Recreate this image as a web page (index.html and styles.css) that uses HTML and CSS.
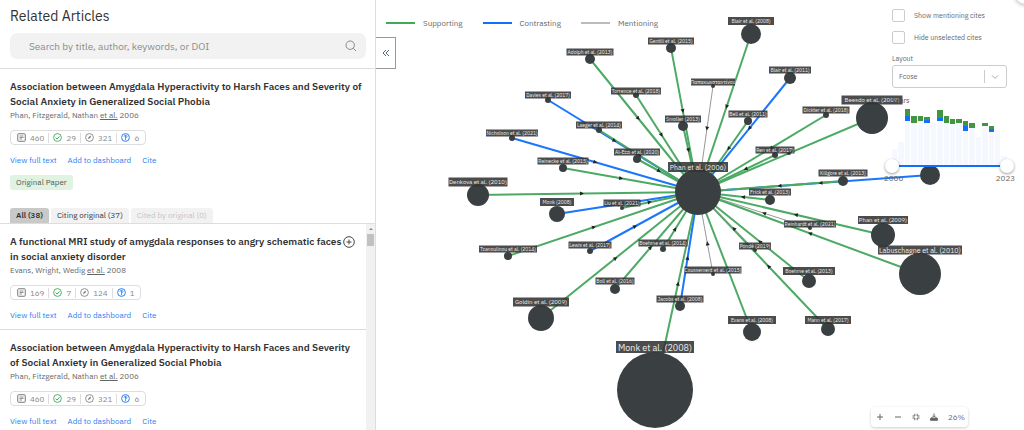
FILE: index.html
```html
<!DOCTYPE html>
<html lang="en">
<head>
<meta charset="utf-8">
<title>Related Articles</title>
<link rel="stylesheet" href="styles.css">
</head>
<body>
<svg class="sprite" aria-hidden="true">
  <symbol id="i-doc" viewBox="0 0 18 18"><rect x="1.5" y="1.5" width="15" height="15" rx="1.5" fill="none" stroke="#777" stroke-width="2"/><path d="M5 6h8M5 9h8M5 12h5" stroke="#777" stroke-width="1.6"/></symbol>
  <symbol id="i-check" viewBox="0 0 18 18"><circle cx="9" cy="9" r="7.8" fill="none" stroke="#43a75c" stroke-width="1.8"/><path d="M5 9.2l3 3 5-5.5" fill="none" stroke="#43a75c" stroke-width="2"/></symbol>
  <symbol id="i-mention" viewBox="0 0 18 18"><circle cx="9" cy="9" r="7.8" fill="none" stroke="#777" stroke-width="1.6"/><path d="M6 12.2l1.2-4 5-3-1.6 5z" fill="#777"/></symbol>
  <symbol id="i-contrast" viewBox="0 0 18 18"><circle cx="9" cy="9" r="7.8" fill="none" stroke="#2a80f0" stroke-width="2"/><path d="M6 7.2c0-3.4 6-3.4 6 0 0 2-3 2-3 4M9 12v2.4M9 4.6v6" fill="none" stroke="#2a80f0" stroke-width="1.7"/></symbol>
</svg>
<div class="app">
  <aside class="sidebar">
    <header class="head">
      <h1>Related Articles</h1>
      <label class="search">
        <input type="text" aria-label="Search articles" placeholder="Search by title, author, keywords, or DOI">
        <svg viewBox="0 0 12 12" width="12" height="12"><circle cx="5.2" cy="5.2" r="4.2"/><path d="M8.3 8.3l2.7 2.7"/></svg>
      </label>
    </header>
    <section class="article original">
      <h2>Association between Amygdala Hyperactivity to Harsh Faces and Severity of Social Anxiety in Generalized Social Phobia</h2>
      <p class="authors">Phan, Fitzgerald, Nathan <u>et al.</u> 2006</p>
      <div class="stats"><span><svg><use href="#i-doc"/></svg>460</span><span><svg><use href="#i-check"/></svg>29</span><span><svg><use href="#i-mention"/></svg>321</span><span><svg><use href="#i-contrast"/></svg>6</span></div>
      <nav class="links"><a href="#">View full text</a><a href="#">Add to dashboard</a><a href="#">Cite</a></nav>
      <span class="tag">Original Paper</span>
    </section>
    <div class="tabs"><button class="active">All (38)</button><button>Citing original (37)</button><button disabled>Cited by original (0)</button></div>
    <div class="results">
      <div class="list">
        <section class="article">
          <div class="titlerow">
            <h2>A functional MRI study of amygdala responses to angry schematic faces in social anxiety disorder</h2>
            <button class="add" aria-label="Add paper"><svg viewBox="0 0 12 12" width="12" height="12"><circle cx="6" cy="6" r="5.3"/><path d="M3.5 6h5M6 3.5v5"/></svg></button>
          </div>
          <p class="authors">Evans, Wright, Wedig <u>et al.</u> 2008</p>
          <div class="stats"><span><svg><use href="#i-doc"/></svg>169</span><span><svg><use href="#i-check"/></svg>7</span><span><svg><use href="#i-mention"/></svg>124</span><span><svg><use href="#i-contrast"/></svg>1</span></div>
          <nav class="links"><a href="#">View full text</a><a href="#">Add to dashboard</a><a href="#">Cite</a></nav>
        </section>
        <section class="article">
          <h2>Association between Amygdala Hyperactivity to Harsh Faces and Severity of Social Anxiety in Generalized Social Phobia</h2>
          <p class="authors">Phan, Fitzgerald, Nathan <u>et al.</u> 2006</p>
          <div class="stats"><span><svg><use href="#i-doc"/></svg>460</span><span><svg><use href="#i-check"/></svg>29</span><span><svg><use href="#i-mention"/></svg>321</span><span><svg><use href="#i-contrast"/></svg>6</span></div>
          <nav class="links"><a href="#">View full text</a><a href="#">Add to dashboard</a><a href="#">Cite</a></nav>
        </section>
      </div>
      <div class="scrollbar"><span class="up"></span><span class="thumb"></span></div>
    </div>
  </aside>
  <main class="graph">
    <svg class="network" id="network" viewBox="376 0 648 430" preserveAspectRatio="xMinYMin meet"></svg>
    <div class="legend"><span class="supporting">Supporting</span><span class="contrasting">Contrasting</span><span class="mentioning">Mentioning</span></div>
    <button class="collapse" aria-label="Collapse panel"><svg viewBox="0 0 8 8" width="8" height="8"><path d="M4 1L1 4l3 3M7 1L4 4l3 3"/></svg></button>
    <div class="bubble"></div>
    <form class="controls">
      <label class="check"><input type="checkbox">Show mentioning cites</label>
      <label class="check"><input type="checkbox">Hide unselected cites</label>
      <label class="caption" for="layout">Layout</label>
      <div class="select"><select id="layout"><option>Fcose</option></select><svg viewBox="0 0 8 8" width="8" height="8"><path d="M1 2.4l3 3 3-3"/></svg></div>
      <span class="caption years">Years</span>
      <div class="chart" id="chart"></div>
      <div class="range"><input type="range" aria-label="From year" min="2006" max="2023" value="2006"><input type="range" aria-label="To year" min="2006" max="2023" value="2023"></div>
      <div class="ends"><span>2006</span><span>2023</span></div>
    </form>
    <div class="zoom">
      <button aria-label="Zoom in"><svg viewBox="0 0 8 8"><path d="M1 4h6M4 1v6"/></svg></button>
      <button aria-label="Zoom out"><svg viewBox="0 0 8 8"><path d="M1 4h6"/></svg></button>
      <button aria-label="Fit"><svg viewBox="0 0 8 8"><path d="M.5 3h2.3V.8M7.5 3H5.2V.8M.5 5h2.3v2.2M7.5 5H5.2v2.2"/></svg></button>
      <button aria-label="Download"><svg viewBox="0 0 8 8"><path d="M4 .5V4M2.5 2.8L4 4.4l1.5-1.6"/><path d="M.5 7.3V5.5L2 4.6l2 1.2 2-1.2 1.5.9v1.8z" fill="#666"/></svg></button>
      <span>26%</span>
    </div>
  </main>
</div>
<script src="graph.js"></script>
</body>
</html>
```
FILE: styles.css
```css
* { box-sizing: border-box; }
body {
  margin: 0;
  font-family: "IBM Plex Sans", "Noto Sans", sans-serif;
  font-size: 8px;
  color: #333;
  background: #fff;
}
h1, h2, p { margin: 0; }
button, input, select { font: inherit; color: inherit; margin: 0; }
button { padding: 0; border: 0; background: none; }
svg { display: block; }
.sprite { display: none; }
.app { display: flex; height: 100vh; overflow: hidden; }

.sidebar {
  flex: 0 0 376px;
  display: flex;
  flex-direction: column;
  min-height: 0;
  border-right: 1px solid #ddd;
}
.head { padding: 6px 9px 9px 10px; border-bottom: 1px solid #ddd; }
h1 { font-size: 14px; line-height: 20px; font-weight: 400; }
.search {
  display: flex;
  align-items: center;
  height: 26px;
  margin-top: 7px;
  padding: 0 9px 0 19px;
  border-radius: 7px;
  background: #f2f2f2;
}
.search input { flex: 1; padding: 0; border: 0; outline: 0; background: none; font-size: 10px; }
.search input::placeholder { color: #8c8c8c; }
.search svg { fill: none; stroke: #888; stroke-width: 1; }

.article { padding: 10px 10px 8px; border-bottom: 1px solid #ddd; }
.original { border: 0; padding-right: 0; padding-bottom: 18px; }
h2 { font-size: 10px; line-height: 15px; font-weight: 600; }
.titlerow { display: flex; }
.titlerow h2 { flex: 1; }
.add { width: 13px; height: 15px; }
.add svg { fill: none; stroke: #444; }
.authors { line-height: 12px; color: #666; }
.stats {
  display: inline-flex;
  align-items: center;
  height: 15px;
  margin-top: 9px;
  border: 1px solid #ddd;
  border-radius: 4px;
  color: #888;
  line-height: 10px;
  padding: 0 2px;
}
.stats span { display: flex; align-items: center; gap: 4px; padding: 0 4px; }
.stats span + span { border-left: 1px solid #ddd; }
.stats svg { width: 9px; height: 9px; }
.links { display: flex; gap: 11px; margin-top: 9px; line-height: 12px; }
.links a { color: #2a80f0; text-decoration: none; }
.tag {
  display: inline-block;
  margin-top: 9px;
  padding: 0 6px;
  line-height: 15px;
  border-radius: 3px;
  background: #dff3e0;
  color: #555;
}
.tabs { display: flex; gap: 2px; padding: 0 10px; border-bottom: 1px solid #ddd; }
.tabs button { padding: 0 6px; line-height: 15px; border-radius: 3px 3px 0 0; background: #f2f2f2; }
.tabs .active { background: #c9c9c7; font-weight: 600; }
.tabs button:disabled { color: #c4c4c4; }
.results { flex: 1; display: flex; min-height: 0; overflow: hidden; }
.list { flex: 1; }
.scrollbar { width: 9px; background: #f1f1f1; display: flex; flex-direction: column; align-items: center; }
.up { margin: 4px 0; border: 2px solid transparent; border-top: 0; border-bottom: 2px solid #888; }
.thumb { width: 7px; height: 12px; background: #c1c1c1; }

.graph { flex: 1; position: relative; min-width: 0; }
.network { position: absolute; top: 0; left: 0; width: 100%; }
.legend { position: absolute; top: 16px; left: 10px; display: flex; gap: 20px; line-height: 14px; color: #666; }
.legend span { display: flex; align-items: center; gap: 8px; }
.legend span::before { content: ""; width: 29px; height: 2px; background: #43a75c; }
.legend .contrasting::before { background: #1070fb; }
.legend .mentioning::before { background: #bbb; }
.collapse {
  position: absolute;
  top: 37px;
  left: 0;
  width: 20px;
  height: 32px;
  border: 1px solid #999;
  border-left: 0;
  background: #fff;
  display: grid;
  place-items: center;
}
.collapse svg { fill: none; stroke: #567; stroke-width: 1; }
.bubble { position: absolute; top: -20px; right: -14px; width: 24px; height: 24px; border-radius: 50%; background: #fff; box-shadow: 0 1px 4px rgba(0,0,0,.3); }

.controls { position: absolute; top: 9px; right: 17px; width: 115px; color: #666; font-size: 7px; }
.check { display: flex; align-items: center; gap: 9px; height: 13px; margin-bottom: 9px; white-space: nowrap; }
.check input { appearance: none; width: 13px; height: 13px; border: 1px solid #ccc; border-radius: 2px; background: #fff; }
.caption { display: block; line-height: 12px; }
.select { position: relative; height: 23px; }
.select select { appearance: none; width: 100%; height: 100%; padding: 0 6px; border: 1px solid #ccc; border-radius: 3px; background: #fff; }
.select svg { position: absolute; right: 8px; top: 8px; fill: none; stroke: #aaa; }
.select::after { content: ""; position: absolute; right: 22px; top: 5px; height: 13px; border-left: 1px solid #ccc; }
.years { margin-top: 7px; color: #555; }
.chart { display: flex; align-items: flex-end; gap: 1px; height: 58px; }
.bar { flex: 1; background: #f5f9ff; }
.bar i { display: block; }
.bar .s { background: #43963f; }
.bar .c { background: #1070fb; }
.range { position: relative; height: 2px; background: #1070fb; }
.range input { appearance: none; position: absolute; left: -7px; top: -6px; width: calc(100% + 14px); height: 14px; background: none; pointer-events: none; }
.range input::-webkit-slider-thumb { appearance: none; width: 14px; height: 14px; border-radius: 50%; background: #fff; box-shadow: 0 1px 3px rgba(0,0,0,.4); pointer-events: auto; }
.ends { display: flex; justify-content: space-between; margin: 5px -8px 0; line-height: 12px; font-size: 8px; }

.zoom {
  position: absolute;
  right: 56px;
  bottom: 3px;
  height: 20px;
  display: flex;
  align-items: center;
  gap: 10px;
  padding: 0 3px 0 5px;
  border-radius: 4px;
  background: #fff;
  box-shadow: 0 1px 3px rgba(0,0,0,.2);
  color: #666;
}
.zoom svg { width: 8px; height: 8px; fill: none; stroke: #666; stroke-width: 1; }
.supporting-edge { stroke: #4caa64; stroke-width: 2; }
.contrasting-edge { stroke: #1b76fb; stroke-width: 2; }
.mentioning-edge { stroke: #999; stroke-width: 1; }
.node { fill: #3a3f42; }
.arrow { fill: #222; }
.plate { fill: #333; fill-opacity: .88; }
.name { fill: #eee; text-anchor: middle; dominant-baseline: central; }
```
FILE: graph.js
```js
const hub = { x: 698, y: 192, r: 23 };
// x, y, radius, edge kind, label, label centre x, label centre y, label width, label height, font size
const nodes = [
  [930, 175, 10, "c", ""],
  [751, 34, 10, "s", "Blair et al. (2008)", 751, 21, 46, 8, 5],
  [671, 48, 5, "s", "Gentili et al. (2015)", 671, 41, 46, 7, 5],
  [713, 86, 2, "m", "Παπακωνσταντίνου", 713, 82, 44, 7, 5],
  [790, 78, 6, "c", "Blair et al. (2011)", 790, 70, 42, 7, 5],
  [826, 115, 3, "s", "Dickter et al. (2018)", 826, 110, 47, 7, 5],
  [872, 118, 16, "s", "Beesdo et al. (2009)", 872, 100, 61, 9, 6],
  [748, 121, 4, "s", "Bell et al. (2011)", 748, 114, 39, 7, 5],
  [683, 126, 5, "s", "Smoller (2013)", 683, 119, 36, 7, 5],
  [636, 95, 3, "s", "Torrence et al. (2018)", 636, 91, 50, 7, 5],
  [590, 59, 5, "s", "Adolph et al. (2013)", 590, 52, 47, 7, 5],
  [548, 100, 3, "c", "Davies et al. (2017)", 548, 95, 46, 7, 5],
  [599, 130, 3, "s", "Laeger et al. (2014)", 599, 125, 46, 7, 5],
  [512, 138, 3, "c", "Nicholson et al. (2021)", 512, 133, 52, 7, 5],
  [637, 159, 4, "s", "Al-Ezzi et al. (2020)", 637, 152, 46, 7, 5],
  [563, 168, 4, "s", "Reinecke et al. (2015)", 563, 161, 51, 7, 5],
  [478, 195, 11, "s", "Denkova et al. (2010)", 478, 182, 59, 9, 6],
  [557, 214, 8, "c", "Monk (2008)", 557, 202, 34, 8, 5],
  [622, 208, 2, "s", "Liu et al. (2021)", 622, 203, 37, 7, 5],
  [508, 256, 4, "s", "Tzanoulinou et al. (2014)", 508, 249, 58, 7, 5],
  [590, 251, 3, "c", "Lewis et al. (2017)", 590, 245, 43, 7, 5],
  [663, 249, 3, "s", "Boehme et al. (2014)", 663, 243, 49, 7, 5],
  [541, 318, 13, "s", "Goldin et al. (2009)", 541, 302, 56, 9, 6],
  [615, 289, 5, "s", "Boll et al. (2016)", 615, 281, 39, 7, 5],
  [680, 306, 5, "c", "Jacobs et al. (2008)", 680, 299, 47, 7, 5],
  [713, 274, 2, "m", "Coussement et al. (2015)", 713, 270, 57, 7, 5],
  [655, 390, 38, "s", "Monk et al. (2008)", 655, 347, 78, 12, 9],
  [752, 332, 9, "s", "Evans et al. (2008)", 752, 320, 48, 8, 5],
  [828, 329, 7, "s", "Mann et al. (2017)", 828, 320, 46, 8, 5],
  [809, 281, 7, "s", "Boehme et al. (2013)", 809, 271, 52, 8, 5],
  [755, 250, 2, "m", "Pondé (2019)", 755, 246, 32, 7, 5],
  [810, 228, 2, "m", "Reinhardt et al. (2021)", 810, 224, 52, 7, 5],
  [883, 235, 12, "s", "Phan et al. (2009)", 883, 220, 50, 8, 6],
  [920, 274, 21, "s", "Labuschagne et al. (2010)", 920, 250, 84, 9, 7],
  [770, 200, 5, "s", "Frick et al. (2013)", 770, 192, 42, 7, 5],
  [843, 181, 5, "s", "Killgore et al. (2013)", 843, 173, 49, 7, 5],
  [775, 155, 3, "s", "Ren et al. (2017)", 775, 150, 39, 7, 5]
];
const kinds = { s: "supporting-edge", c: "contrasting-edge", m: "mentioning-edge" };
let edges = "", dots = "", arrows = "", labels = "";
const plate = (t, x, y, w, h, f) =>
  `<rect class="plate" x="${x - w / 2}" y="${y - h / 2}" width="${w}" height="${h}"/>` +
  `<text class="name" x="${x}" y="${y}" font-size="${f}">${t}</text>`;
for (const [x, y, r, kind, text, ...box] of nodes) {
  const dx = hub.x - x, dy = hub.y - y, len = Math.hypot(dx, dy);
  const t = (r + len - hub.r) / 2 / len;
  const angle = Math.atan2(dy, dx) * 180 / Math.PI;
  edges += `<line class="${kinds[kind]}" x1="${x}" y1="${y}" x2="${hub.x}" y2="${hub.y}"/>`;
  arrows += `<path class="arrow" d="M-2-2L2 0L-2 2z" transform="translate(${x + dx * t} ${y + dy * t}) rotate(${angle})"/>`;
  dots += `<circle class="node" cx="${x}" cy="${y}" r="${r}"/>`;
  if (text) labels += plate(text, ...box);
}
dots += `<circle class="node" cx="${hub.x}" cy="${hub.y}" r="${hub.r}"/>`;
labels += plate("Phan et al. (2006)", 698, 167, 60, 10, 7);
document.getElementById("network").innerHTML = edges + arrows + dots + labels;

// total height, supporting, contrasting
const years = [[16,0,0],[23,0,0],[56,7,5],[49,7,0],[49,5,0],[48,3,3],[42,0,0],[55,8,3],[49,7,0],[46,5,0],[46,4,0],[44,5,5],[42,5,0],[28,0,0],[42,3,0],[39,3,3],[35,0,0],[9,0,0]];
document.getElementById("chart").innerHTML = years.map(([h, s, c]) =>
  `<div class="bar" style="height:${h}px"><i class="s" style="height:${s}px"></i><i class="c" style="height:${c}px"></i></div>`).join("");
```
